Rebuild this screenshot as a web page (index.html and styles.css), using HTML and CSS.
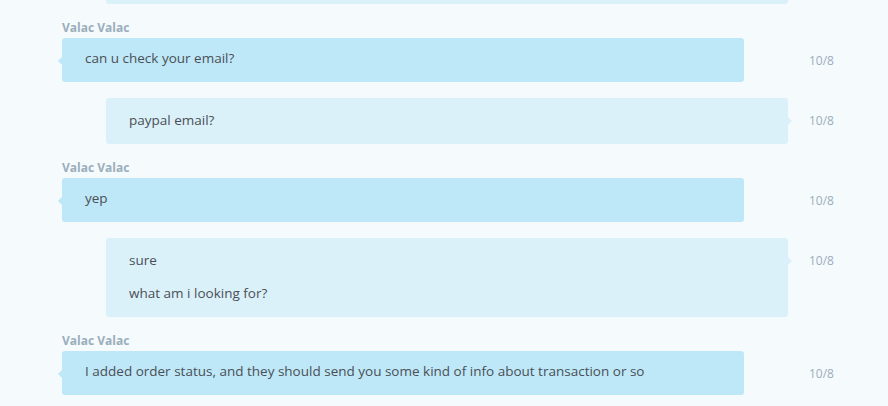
FILE: index.html
```html
<!DOCTYPE html>
<html lang="en">
<head>
    <meta charset="UTF-8">
    <meta name="viewport" content="width=device-width, initial-scale=1.0">
    <title>Chat</title>
    <link rel="stylesheet" href="styles.css">
</head>
<body>
    <div class="thread">
        <div class="msg mine">
            <div class="bubble">
                <p class="blank"></p>
            </div>
        </div>

        <div class="msg theirs">
            <div class="author">Valac Valac</div>
            <div class="line">
                <div class="bubble">
                    <p>can u check your email?</p>
                </div>
                <span class="time">10/8</span>
            </div>
        </div>

        <div class="msg mine">
            <div class="bubble">
                <p>paypal email?</p>
            </div>
            <span class="time">10/8</span>
        </div>

        <div class="msg theirs">
            <div class="author">Valac Valac</div>
            <div class="line">
                <div class="bubble">
                    <p>yep</p>
                </div>
                <span class="time">10/8</span>
            </div>
        </div>

        <div class="msg mine">
            <div class="bubble">
                <p>sure</p>
                <p>what am i looking for?</p>
            </div>
            <span class="time">10/8</span>
        </div>

        <div class="msg theirs">
            <div class="author">Valac Valac</div>
            <div class="line">
                <div class="bubble">
                    <p>I added order status, and they should send you some kind of info about transaction or so</p>
                </div>
                <span class="time">10/8</span>
            </div>
        </div>
    </div>
</body>
</html>
```

FILE: styles.css
```css
body {
    margin: 0;
    background: #f5fafd;
    font-family: "Open Sans", "Noto Sans", Arial, sans-serif;
    color: #4a4f55;
}
.thread {
    height: 100vh;
    overflow: hidden;
    display: flex;
    flex-direction: column;
    justify-content: flex-end;
    padding: 0 0 11px 62px;
    box-sizing: border-box;
}
.msg {
    display: flex;
    align-items: flex-start;
    margin-top: 16px;
}
.theirs {
    flex-direction: column;
    align-items: stretch;
    margin-top: 15px;
}
.line {
    display: flex;
    align-items: flex-start;
}
.author {
    font-size: 12px;
    font-weight: bold;
    color: #9aaebc;
    line-height: 17px;
    margin-bottom: 2px;
}
.bubble {
    position: relative;
    width: 682px;
    box-sizing: border-box;
    border-radius: 3px;
    padding: 10px 23px 14px;
}
.bubble p {
    margin: 0;
    font-size: 13.5px;
    line-height: 20px;
}
.bubble p + p {
    margin-top: 13px;
}
.bubble .blank {
    height: 20px;
}
.theirs .bubble {
    background: #bee8f8;
}
.mine .bubble {
    background: #dbf1fa;
    margin-left: 44px;
    padding: 12px 23px 14px;
}
.bubble::after {
    content: "";
    position: absolute;
    top: 19px;
    border: 4px solid transparent;
}
.theirs .bubble::after {
    left: -4px;
    border-left: 0;
    border-right-color: #bee8f8;
}
.mine .bubble::after {
    right: -4px;
    border-right: 0;
    border-left-color: #dbf1fa;
}
.time {
    font-size: 12px;
    color: #9aaebb;
    line-height: 16px;
    margin-top: 15px;
}
.theirs .time {
    margin-left: 65px;
}
.mine .time {
    margin-left: 21px;
}
```
